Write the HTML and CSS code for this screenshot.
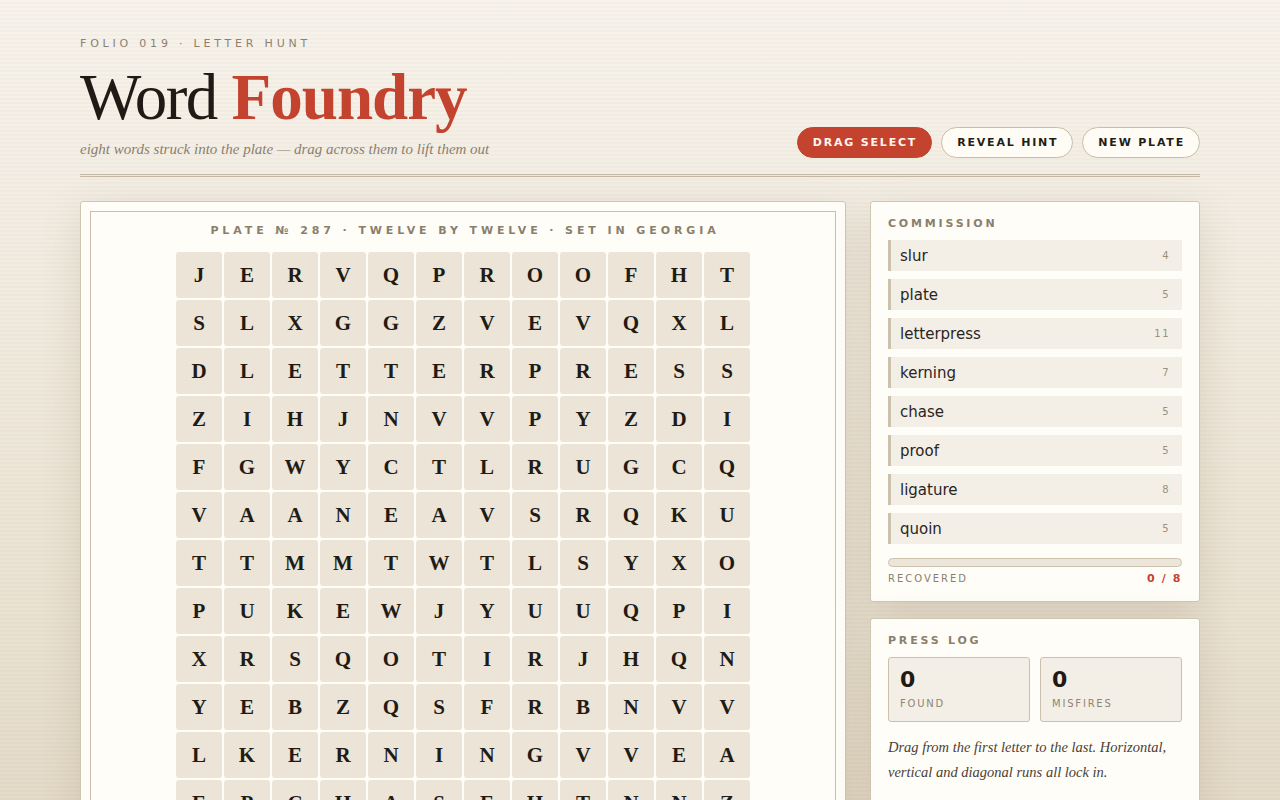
FILE: index.html
```html
<!DOCTYPE html>
<html lang="en">
<head>
<meta charset="utf-8">
<title>Word Foundry</title>
<link rel="stylesheet" href="styles.css">
</head>
<body>
<div class="page">
  <header class="masthead">
    <div class="mast-left">
      <div class="kicker">FOLIO 019 · LETTER HUNT</div>
      <h1 class="title">Word <span class="accent">Foundry</span></h1>
      <p class="subtitle">eight words struck into the plate — drag across them to lift them out</p>
    </div>
    <div class="actions">
      <button class="btn btn-primary">DRAG SELECT</button>
      <button class="btn">REVEAL HINT</button>
      <button class="btn">NEW PLATE</button>
    </div>
  </header>

  <main class="layout">
    <section class="plate-card">
      <div class="plate-frame">
        <div class="plate-head">PLATE № 287 · TWELVE BY TWELVE · SET IN GEORGIA</div>
        <div class="grid">
          <span>J</span><span>E</span><span>R</span><span>V</span><span>Q</span><span>P</span><span>R</span><span>O</span><span>O</span><span>F</span><span>H</span><span>T</span>
          <span>S</span><span>L</span><span>X</span><span>G</span><span>G</span><span>Z</span><span>V</span><span>E</span><span>V</span><span>Q</span><span>X</span><span>L</span>
          <span>D</span><span>L</span><span>E</span><span>T</span><span>T</span><span>E</span><span>R</span><span>P</span><span>R</span><span>E</span><span>S</span><span>S</span>
          <span>Z</span><span>I</span><span>H</span><span>J</span><span>N</span><span>V</span><span>V</span><span>P</span><span>Y</span><span>Z</span><span>D</span><span>I</span>
          <span>F</span><span>G</span><span>W</span><span>Y</span><span>C</span><span>T</span><span>L</span><span>R</span><span>U</span><span>G</span><span>C</span><span>Q</span>
          <span>V</span><span>A</span><span>A</span><span>N</span><span>E</span><span>A</span><span>V</span><span>S</span><span>R</span><span>Q</span><span>K</span><span>U</span>
          <span>T</span><span>T</span><span>M</span><span>M</span><span>T</span><span>W</span><span>T</span><span>L</span><span>S</span><span>Y</span><span>X</span><span>O</span>
          <span>P</span><span>U</span><span>K</span><span>E</span><span>W</span><span>J</span><span>Y</span><span>U</span><span>U</span><span>Q</span><span>P</span><span>I</span>
          <span>X</span><span>R</span><span>S</span><span>Q</span><span>O</span><span>T</span><span>I</span><span>R</span><span>J</span><span>H</span><span>Q</span><span>N</span>
          <span>Y</span><span>E</span><span>B</span><span>Z</span><span>Q</span><span>S</span><span>F</span><span>R</span><span>B</span><span>N</span><span>V</span><span>V</span>
          <span>L</span><span>K</span><span>E</span><span>R</span><span>N</span><span>I</span><span>N</span><span>G</span><span>V</span><span>V</span><span>E</span><span>A</span>
          <span>E</span><span>P</span><span>C</span><span>H</span><span>A</span><span>S</span><span>E</span><span>H</span><span>T</span><span>N</span><span>N</span><span>Z</span>
        </div>
      </div>
    </section>

    <aside class="side">
      <section class="card">
        <h2 class="card-title">COMMISSION</h2>
        <ul class="words">
          <li><span class="w">slur</span><span class="n">4</span></li>
          <li><span class="w">plate</span><span class="n">5</span></li>
          <li><span class="w">letterpress</span><span class="n">11</span></li>
          <li><span class="w">kerning</span><span class="n">7</span></li>
          <li><span class="w">chase</span><span class="n">5</span></li>
          <li><span class="w">proof</span><span class="n">5</span></li>
          <li><span class="w">ligature</span><span class="n">8</span></li>
          <li><span class="w">quoin</span><span class="n">5</span></li>
        </ul>
        <div class="progress"><div class="progress-fill"></div></div>
        <div class="progress-meta"><span>RECOVERED</span><span class="count">0 / 8</span></div>
      </section>

      <section class="card card-log">
        <h2 class="card-title">PRESS LOG</h2>
        <div class="stats">
          <div class="stat"><div class="stat-num">0</div><div class="stat-label">FOUND</div></div>
          <div class="stat"><div class="stat-num">0</div><div class="stat-label">MISFIRES</div></div>
        </div>
        <p class="note">Drag from the first letter to the last. Horizontal, vertical and diagonal runs all lock in.</p>
      </section>
    </aside>
  </main>
</div>
</body>
</html>
```

FILE: styles.css
```css
* { box-sizing: border-box; }

html, body {
  margin: 0;
  padding: 0;
}

body {
  min-height: 100vh;
  font-family: "DejaVu Sans", Verdana, sans-serif;
  color: #2a241e;
  background-color: #efe9de;
  background-image:
    repeating-linear-gradient(180deg, rgba(140, 115, 70, 0) 0px, rgba(140, 115, 70, 0) 2px, rgba(140, 115, 70, 0.035) 2px, rgba(140, 115, 70, 0.035) 4px),
    linear-gradient(180deg, #f7f3ec 0%, #f1ebe0 35%, #e9e1d1 75%, #e2d8c5 100%);
}

.page {
  padding: 37px 80px 0;
}

.masthead {
  display: flex;
  justify-content: space-between;
  align-items: flex-end;
  padding-bottom: 15px;
  border-bottom: 3px double #c3b9a5;
}

.kicker {
  font-size: 11px;
  line-height: 14px;
  letter-spacing: 3.8px;
  color: #8c8170;
}

.title {
  margin: 14px 0 0;
  font-family: "Liberation Serif", "Times New Roman", serif;
  font-weight: 400;
  font-size: 65px;
  line-height: 64px;
  letter-spacing: -1.5px;
  color: #1f1a15;
}

.title .accent {
  font-weight: 700;
  color: #c4432f;
  letter-spacing: -1px;
}

.subtitle {
  margin: 10px 0 0;
  font-family: "Liberation Serif", "Times New Roman", serif;
  font-style: italic;
  font-size: 15px;
  line-height: 20px;
  color: #8a7f6e;
}

.actions {
  display: flex;
  gap: 9px;
  padding-bottom: 1px;
}

.btn {
  font-family: "DejaVu Sans", Verdana, sans-serif;
  font-weight: 700;
  font-size: 11px;
  letter-spacing: 1.8px;
  height: 31px;
  padding: 0 14px 0 15px;
  border-radius: 16px;
  border: 1px solid #c8bea9;
  background: #fffcf5;
  color: #231d18;
  cursor: pointer;
}

.btn-primary {
  background: #c4432f;
  border-color: #c4432f;
  color: #fff6ee;
}

.layout {
  display: grid;
  grid-template-columns: 766px 330px;
  justify-content: space-between;
  align-items: start;
  margin-top: 24px;
}

.plate-card {
  background: #fffdf8;
  border: 1px solid #cfc6b2;
  border-radius: 3px;
  padding: 9px;
  box-shadow: 0 12px 40px rgba(110, 90, 50, 0.16);
}

.plate-frame {
  border: 1px solid #c9bfab;
  padding: 12px 0 20px;
}

.plate-head {
  text-align: center;
  font-size: 11px;
  font-weight: 700;
  letter-spacing: 3.9px;
  line-height: 14px;
  color: #8a7f6c;
  margin-bottom: 14px;
  padding-left: 4px;
}

.grid {
  display: grid;
  grid-template-columns: repeat(12, 46px);
  grid-auto-rows: 46px;
  gap: 2px;
  justify-content: center;
}

.grid span {
  display: flex;
  align-items: center;
  justify-content: center;
  background: #ebe4d7;
  border-radius: 3px;
  font-family: "Liberation Serif", "Times New Roman", serif;
  font-weight: 700;
  font-size: 21px;
  color: #211b15;
}

.side {
  display: flex;
  flex-direction: column;
  gap: 16px;
}

.card {
  background: #fffdf8;
  border: 1px solid #cfc6b2;
  border-radius: 3px;
  padding: 15px 17px 15px;
  box-shadow: 0 12px 40px rgba(110, 90, 50, 0.16);
}

.card-log {
  padding-bottom: 20px;
}

.card-title {
  margin: 0 0 9px;
  font-size: 11px;
  line-height: 14px;
  font-weight: 700;
  letter-spacing: 2.8px;
  color: #8a7f6c;
}

.words {
  list-style: none;
  margin: 0;
  padding: 0;
  display: flex;
  flex-direction: column;
  gap: 8px;
}

.words li {
  display: flex;
  justify-content: space-between;
  align-items: center;
  height: 31px;
  padding: 0 12px 0 9px;
  background: #f3efe6;
  border-left: 3px solid #cbc1ac;
}

.words .w {
  font-size: 15px;
  color: #2a241e;
}

.words .n {
  font-size: 10px;
  letter-spacing: 1.5px;
  color: #9a9080;
}

.progress {
  margin-top: 14px;
  height: 9px;
  border: 1px solid #cbc1ac;
  border-radius: 5px;
  background: #ece6da;
  overflow: hidden;
}

.progress-fill {
  width: 0;
  height: 100%;
  background: #c4432f;
}

.progress-meta {
  display: flex;
  justify-content: space-between;
  margin-top: 5px;
  font-size: 10px;
  line-height: 14px;
  letter-spacing: 2px;
  color: #8a7f6c;
}

.progress-meta .count {
  color: #c4432f;
  font-weight: 700;
  font-size: 11px;
  letter-spacing: 1.6px;
}

.stats {
  display: grid;
  grid-template-columns: 1fr 1fr;
  gap: 10px;
}

.stat {
  background: #f3efe6;
  border: 1px solid #cbc1ac;
  border-radius: 3px;
  padding: 9px 11px 11px;
  height: 65px;
}

.stat-num {
  font-size: 22px;
  font-weight: 700;
  line-height: 26px;
  color: #1f1a15;
}

.stat-label {
  margin-top: 4px;
  font-size: 10px;
  line-height: 14px;
  letter-spacing: 1.8px;
  color: #8f8575;
}

.note {
  margin: 13px 0 0;
  font-family: "Liberation Serif", "Times New Roman", serif;
  font-style: italic;
  font-size: 14.5px;
  line-height: 25px;
  color: #4a4136;
}
```
